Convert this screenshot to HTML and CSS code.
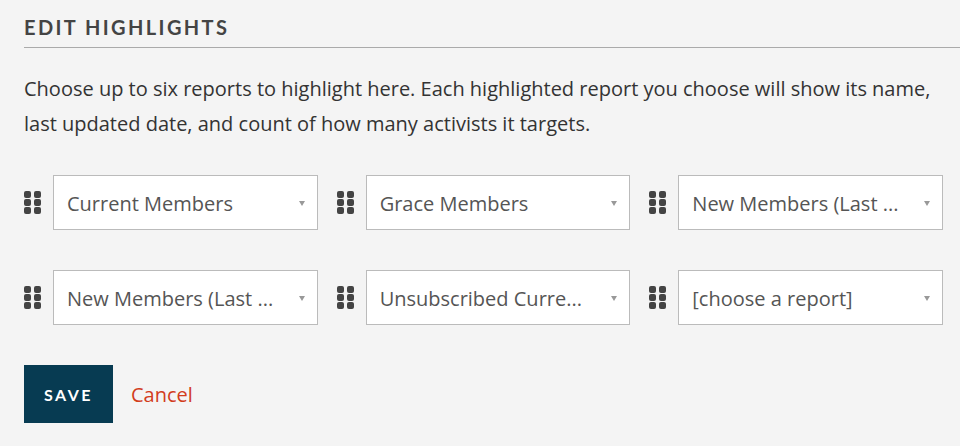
FILE: index.html
```html
<!DOCTYPE html>
<html lang="en">
<head>
    <meta charset="UTF-8">
    <title>Edit Highlights</title>
    <link rel="stylesheet" href="styles.css">
</head>
<body>
    <div class="panel">
        <h2 class="panel-title">Edit Highlights</h2>

        <p class="intro">Choose up to six reports to highlight here. Each highlighted report you choose will show its name, last updated date, and count of how many activists it targets.</p>

        <!-- six sortable report slots -->
        <div class="slots">
            <div class="slot">
                <span class="handle"><i></i><i></i><i></i><i></i><i></i><i></i></span>
                <div class="picker">Current Members</div>
            </div>
            <div class="slot">
                <span class="handle"><i></i><i></i><i></i><i></i><i></i><i></i></span>
                <div class="picker">Grace Members</div>
            </div>
            <div class="slot">
                <span class="handle"><i></i><i></i><i></i><i></i><i></i><i></i></span>
                <div class="picker">New Members (Last ...</div>
            </div>
            <div class="slot">
                <span class="handle"><i></i><i></i><i></i><i></i><i></i><i></i></span>
                <div class="picker">New Members (Last ...</div>
            </div>
            <div class="slot">
                <span class="handle"><i></i><i></i><i></i><i></i><i></i><i></i></span>
                <div class="picker">Unsubscribed Curre...</div>
            </div>
            <div class="slot">
                <span class="handle"><i></i><i></i><i></i><i></i><i></i><i></i></span>
                <div class="picker">[choose a report]</div>
            </div>
        </div>

        <div class="actions">
            <button class="btn-save">Save</button>
            <a class="cancel" href="#">Cancel</a>
        </div>
    </div>
</body>
</html>
```

FILE: styles.css
```css
body {
    margin: 0;
    background-color: #f4f4f4;
    font-family: 'Open Sans', sans-serif;
    color: #333;
}

.panel {
    padding: 14px 0 24px 24px;
}

.panel-title {
    margin: 0;
    font-family: Lato, sans-serif;
    font-weight: 700;
    font-size: 20px;
    line-height: 26px;
    letter-spacing: 2.4px;
    text-transform: uppercase;
    color: #444;
    padding-bottom: 7px;
    border-bottom: 1px solid #aaa;
}

.intro {
    margin: 23px 18px 0 0;
    font-size: 20px;
    line-height: 35px;
    color: #333;
}

.slots {
    display: grid;
    grid-template-columns: repeat(3, 1fr);
    column-gap: 19px;
    row-gap: 40px;
    width: 919px;
    margin-top: 34px;
}

.slot {
    display: flex;
    align-items: center;
    gap: 12px;
}

.handle {
    display: grid;
    grid-template-columns: 7px 7px;
    grid-auto-rows: 7px;
    column-gap: 3px;
    row-gap: 1px;
    flex-shrink: 0;
}

.handle i {
    display: block;
    background: #444;
    border-radius: 2px;
}

.picker {
    position: relative;
    flex: 1;
    height: 55px;
    box-sizing: border-box;
    border: 1px solid #bbb;
    background: #fff;
    padding: 0 30px 0 13px;
    font-size: 20px;
    line-height: 55px;
    color: #555;
    white-space: nowrap;
    overflow: hidden;
}

.picker::after {
    content: '';
    position: absolute;
    right: 12px;
    top: 25px;
    border-left: 3.5px solid transparent;
    border-right: 3.5px solid transparent;
    border-top: 5px solid #999;
}

.actions {
    display: flex;
    align-items: center;
    gap: 18px;
    margin-top: 40px;
}

.btn-save {
    width: 89px;
    height: 58px;
    border: none;
    background-color: #073b52;
    color: #fff;
    font-family: Lato, sans-serif;
    font-weight: 700;
    font-size: 16px;
    letter-spacing: 2.5px;
    text-transform: uppercase;
    cursor: pointer;
}

.cancel {
    color: #d23c1c;
    font-size: 20px;
    text-decoration: none;
}
```
